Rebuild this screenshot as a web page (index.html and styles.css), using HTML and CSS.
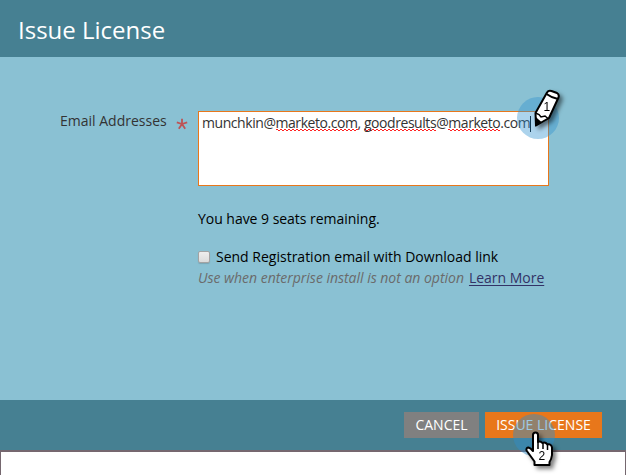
FILE: index.html
```html
<!DOCTYPE html>
<html lang="en">
<head>
<meta charset="utf-8">
<title>Issue License</title>
<link rel="stylesheet" href="styles.css">
</head>
<body>
<section class="dialog">
  <header class="dialog-header"><h1>Issue License</h1></header>
  <main class="dialog-body">
    <div class="field-label"><span class="label-text">Email Addresses</span><svg class="required" viewBox="0 0 12 12"><path d="M6 6V.8M6 6L.8 4.3M6 6l5.2-1.7M6 6l-3.2 4.7M6 6l3.2 4.7"/></svg></div>
    <div class="field">
      <div class="emails" contenteditable="true" spellcheck="false"><span class="address">munchkin@<span class="misspelled">marketo.com</span>, <span class="misspelled">goodresults</span>@<span class="misspelled">marketo</span>.com</span><i class="caret"></i></div>
      <p class="seats">You have 9 seats remaining.</p>
      <label class="option"><i class="checkbox"></i><span class="option-text">Send Registration email with Download link</span></label>
      <p class="hint"><em>Use when enterprise install is not an option</em><a href="#">Learn More</a></p>
    </div>
  </main>
  <footer class="dialog-footer">
    <button class="btn cancel"><span>CANCEL</span></button>
    <button class="btn issue"><span>ISSUE LICENSE</span></button>
  </footer>
</section>
<div class="page-edge"></div>
<div class="spot spot-one"></div>
<svg class="marker pencil" viewBox="0 0 50 50">
  <path d="M11.500 25L23 4.500Q24.500 2 27.500 3L33 5Q35.500 6.500 34.500 9.500L25 30L12 37.500Z" fill="#fff" stroke="#000" stroke-width="2" stroke-linejoin="round"/>
  <path d="M22.500 6Q28 10 34 11" fill="none" stroke="#000" stroke-width="2"/>
  <path d="M11.500 25L15 26.500L17 29L21 28L24 30.500" fill="none" stroke="#000" stroke-width="1.500"/>
  <path d="M11 28L14 31L18 34.500L11.200 38.500Z"/>
  <text x="19.500" y="22.500">1</text>
</svg>
<div class="spot spot-two"></div>
<svg class="marker hand" viewBox="0 0 50 50">
  <path d="M14 21V5Q14 2.500 16.500 2.500Q19 2.500 19 5V12Q21 10.500 23.500 13Q26 11.500 28.500 14.500Q32 13.500 33 17.500V25Q32.500 29 30.500 32V35H15.500V31.500L7.500 20.500Q7 17.500 9.500 17.500Q11.500 18 14 21Z" fill="#fff" stroke="#000" stroke-width="2" stroke-linejoin="round"/>
  <path d="M19 12V19M24 13V19M28.500 15V20" fill="none" stroke="#000" stroke-width="1.500"/>
  <text x="19.500" y="30">2</text>
</svg>
</body>
</html>
```

FILE: styles.css
```css
* { box-sizing: border-box; }
body {
  margin: 0;
  width: 626px;
  height: 475px;
  overflow: hidden;
  background: #fff;
  color: #000;
  font: 14px/20px "Open Sans", "Noto Sans", sans-serif;
}
h1, p { margin: 0; }
.dialog { border-bottom: 2px solid #75676f; }
.dialog-header {
  height: 57px;
  padding: 14px 18px;
  background: #468092;
  color: #fff;
}
.dialog-header h1 { font-size: 24px; line-height: 32px; font-weight: 400; }
.dialog-body {
  display: flex;
  height: 343px;
  padding-top: 54px;
  background: #8ac1d3;
}
.field-label {
  display: flex;
  justify-content: space-between;
  width: 198px;
  padding: 0 10px 0 60px;
  color: #333;
}
.required {
  width: 12px;
  height: 12px;
  margin-top: 7px;
  fill: none;
  stroke: #bd5355;
  stroke-width: 1.8;
}
.field { width: 351px; }
.emails {
  display: flex;
  height: 75px;
  padding: 1px 3px;
  border: 1px solid #e8771b;
  background: #fff;
  color: #333;
  white-space: nowrap;
}
.address { letter-spacing: -.44px; }
.misspelled {
  background:
    linear-gradient(45deg, transparent 42%, #f22 42%, #f22 58%, transparent 58%) 0 calc(100% - 1px) / 4px 2px repeat-x,
    linear-gradient(-45deg, transparent 42%, #f22 42%, #f22 58%, transparent 58%) 2px calc(100% - 1px) / 4px 2px repeat-x;
}
.caret { width: 1px; height: 16px; margin-top: 3px; background: #000; }
.seats { margin-top: 23px; letter-spacing: -.03px; }
.option { display: flex; align-items: center; margin-top: 18px; }
.checkbox {
  width: 12px;
  height: 12px;
  margin-right: 6px;
  border: 1px solid #a3a3a3;
  border-radius: 2px;
  background: linear-gradient(#eee, #dcdcdc);
  box-shadow: 0 1px 1px #7aa6b4;
}
.hint { display: flex; gap: 5px; margin-top: 1px; white-space: nowrap; color: #6b6b6b; letter-spacing: -.02px; }
.hint a { color: #333366; text-underline-offset: 2px; }
.dialog-footer {
  display: flex;
  justify-content: flex-end;
  gap: 6px;
  height: 50px;
  padding: 12px 24px;
  background: #468092;
}
.btn {
  height: 26px;
  padding: 0;
  border: 0;
  color: #fff;
  font: inherit;
  line-height: 26px;
  white-space: nowrap;
}
.cancel { width: 75px; background: #808080; }
.issue { width: 117px; background: #e8771b; }
.page-edge { height: 23px; border: solid #75676f; border-width: 0 1px; }
.spot {
  position: absolute;
  width: 42px;
  height: 42px;
  border-radius: 50%;
  background: rgba(48, 145, 207, .4);
}
.spot-one { left: 517px; top: 97px; }
.spot-two { left: 513px; top: 414px; background: rgba(48, 140, 200, .47); }
.marker {
  position: absolute;
  width: 50px;
  height: 50px;
  overflow: visible;
  filter: drop-shadow(3px 3px 2px rgba(0, 0, 0, .5));
}
.marker text { font: 12px "Liberation Sans", sans-serif; }
.pencil { left: 524px; top: 88px; }
.hand { left: 519px; top: 430px; }
```
